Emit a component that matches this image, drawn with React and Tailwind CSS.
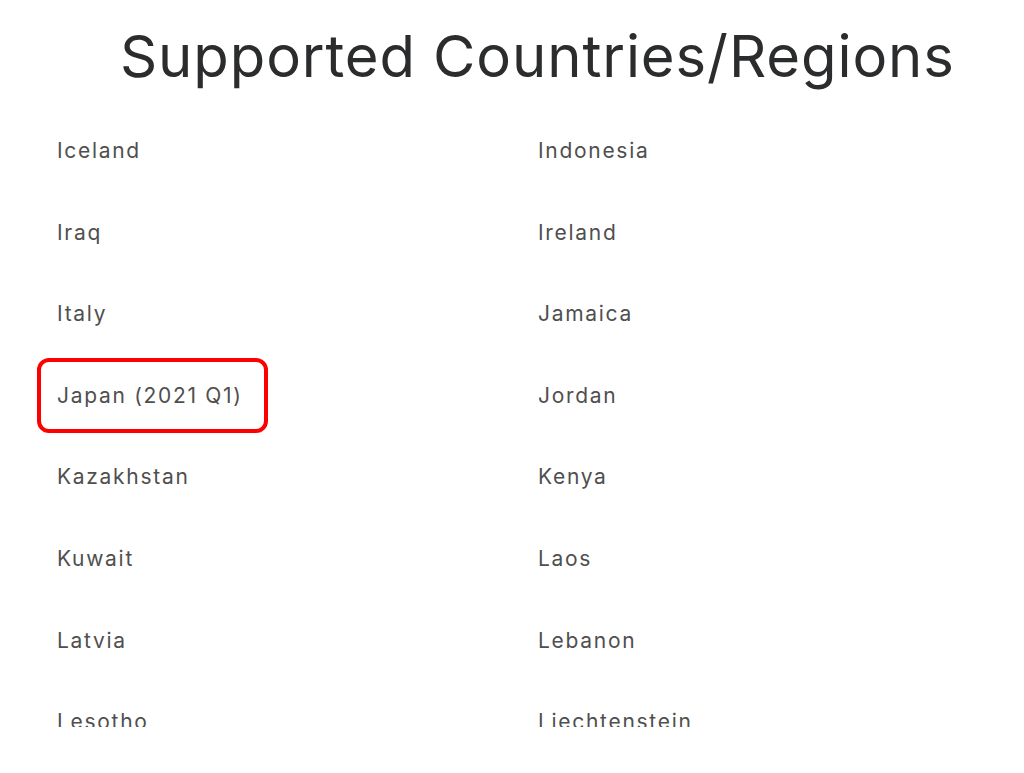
import React from "react";

const rows = [
  ["Iceland", "Indonesia"],
  ["Iraq", "Ireland"],
  ["Italy", "Jamaica"],
  ["Japan (2021 Q1)", "Jordan"],
  ["Kazakhstan", "Kenya"],
  ["Kuwait", "Laos"],
  ["Latvia", "Lebanon"],
  ["Lesotho", "Liechtenstein"],
];

export default function App() {
  return (
    <div className="w-[1024px] h-[773px] bg-white" style={{ fontFamily: "Inter, 'Noto Sans', sans-serif" }}>
      <div className="h-[727px] overflow-hidden">
        <h1 className="pl-[120px] pt-[22px] text-[58px] leading-[68px] text-[#2a2c2d] tracking-[0.9px] whitespace-nowrap">
          Supported Countries/Regions
        </h1>
        <div className="mt-[20px] flex flex-col text-[21px] tracking-[1.7px] text-[#4f4f4f]">
          {rows.map(([a, b]) => (
            <div key={a} className="flex h-[81.6px] items-center">
              <div className="w-[538px] shrink-0 pl-[57px]">
                {a === "Japan (2021 Q1)" ? (
                  <span className="-ml-[20px] inline-flex h-[75px] w-[231px] items-center rounded-[12px] border-[4px] border-[#ff0000] pl-[16px]">
                    {a}
                  </span>
                ) : (
                  <span>{a}</span>
                )}
              </div>
              <div className="flex-1">{b}</div>
            </div>
          ))}
        </div>
      </div>
    </div>
  );
}
